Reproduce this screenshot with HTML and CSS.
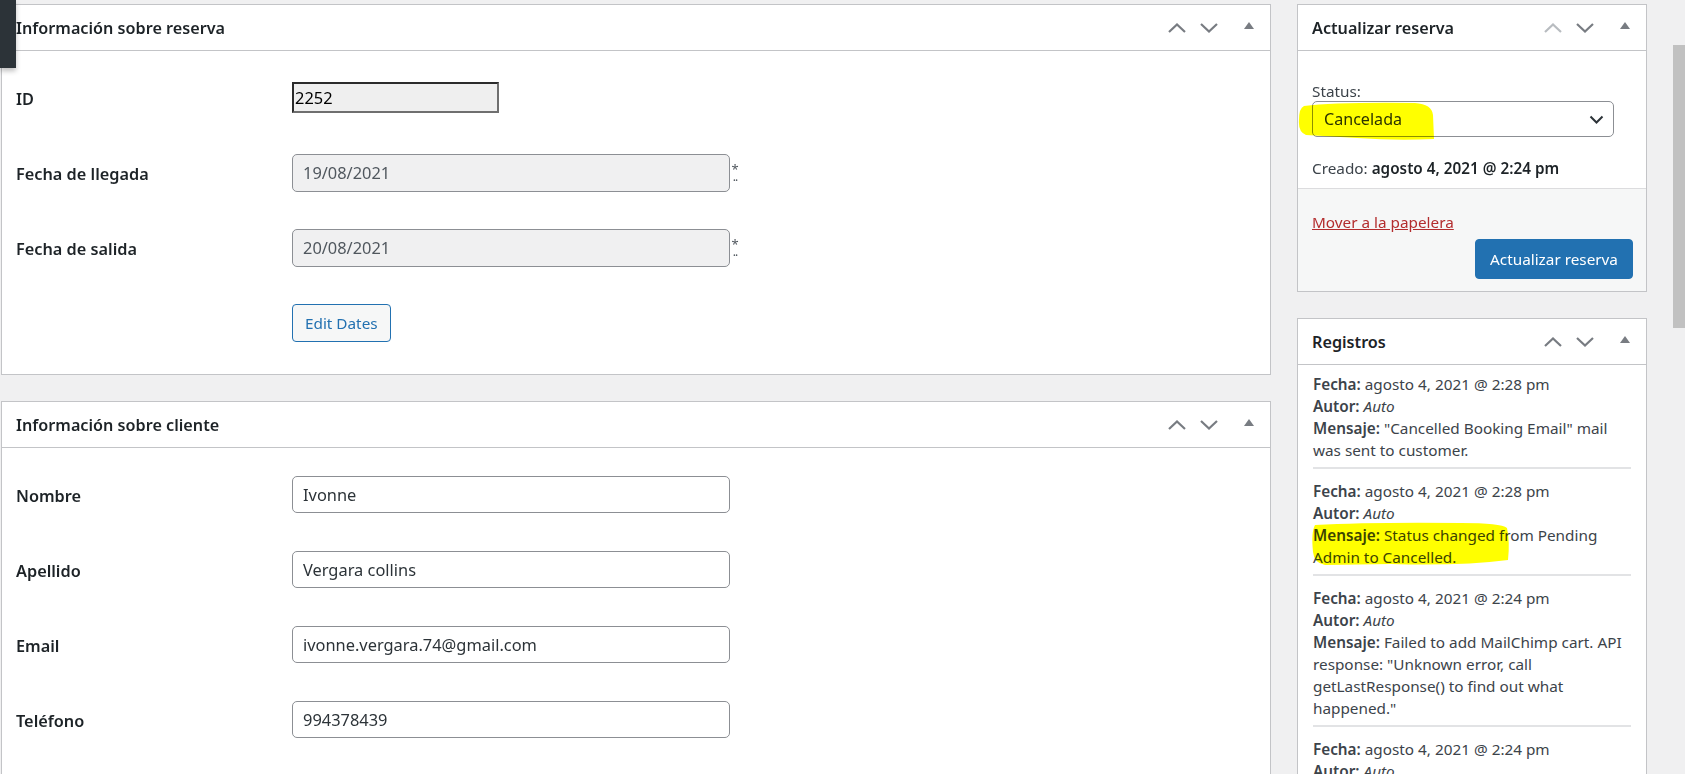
FILE: index.html
```html
<!doctype html>
<html lang="es">
  <head>
    <meta charset="UTF-8" />
    <title>Editar reserva</title>
    <link rel="stylesheet" href="styles.css">
  </head>
  <body>
    <div class="menu-flyout"></div>

    <div class="wrap">
      <div class="main-col">
        <section class="postbox">
          <div class="postbox-header">
            <h2>Información sobre reserva</h2>
            <div class="handle-actions">
              <button class="handle-btn"><svg width="18" height="10" viewBox="0 0 18 10"><polyline points="1,9 9,1.5 17,9" /></svg></button>
              <button class="handle-btn"><svg width="18" height="10" viewBox="0 0 18 10"><polyline points="1,1 9,8.5 17,1" /></svg></button>
              <button class="handle-btn toggle"><svg width="10" height="7" viewBox="0 0 10 7"><polygon points="0,7 5,0 10,7" /></svg></button>
            </div>
          </div>
          <div class="inside">
            <div class="field-row">
              <label>ID</label>
              <input class="id-field" type="text" value="2252" readonly />
            </div>
            <div class="field-row">
              <label>Fecha de llegada</label>
              <input class="text-field readonly" type="text" value="19/08/2021" readonly />
              <span class="req">*<span class="req-dots">..</span></span>
            </div>
            <div class="field-row">
              <label>Fecha de salida</label>
              <input class="text-field readonly" type="text" value="20/08/2021" readonly />
              <span class="req">*<span class="req-dots">..</span></span>
            </div>
            <div class="field-row actions-row">
              <button class="button-secondary">Edit Dates</button>
            </div>
          </div>
        </section>

        <section class="postbox">
          <div class="postbox-header">
            <h2>Información sobre cliente</h2>
            <div class="handle-actions">
              <button class="handle-btn"><svg width="18" height="10" viewBox="0 0 18 10"><polyline points="1,9 9,1.5 17,9" /></svg></button>
              <button class="handle-btn"><svg width="18" height="10" viewBox="0 0 18 10"><polyline points="1,1 9,8.5 17,1" /></svg></button>
              <button class="handle-btn toggle"><svg width="10" height="7" viewBox="0 0 10 7"><polygon points="0,7 5,0 10,7" /></svg></button>
            </div>
          </div>
          <div class="inside tall">
            <div class="field-row">
              <label>Nombre</label>
              <input class="text-field" type="text" value="Ivonne" />
            </div>
            <div class="field-row">
              <label>Apellido</label>
              <input class="text-field" type="text" value="Vergara collins" />
            </div>
            <div class="field-row">
              <label>Email</label>
              <input class="text-field" type="text" value="ivonne.vergara.74@gmail.com" />
            </div>
            <div class="field-row">
              <label>Teléfono</label>
              <input class="text-field" type="text" value="994378439" />
            </div>
          </div>
        </section>
      </div>

      <aside class="side-col">
        <section class="postbox">
          <div class="postbox-header">
            <h2>Actualizar reserva</h2>
            <div class="handle-actions">
              <button class="handle-btn disabled"><svg width="18" height="10" viewBox="0 0 18 10"><polyline points="1,9 9,1.5 17,9" /></svg></button>
              <button class="handle-btn"><svg width="18" height="10" viewBox="0 0 18 10"><polyline points="1,1 9,8.5 17,1" /></svg></button>
              <button class="handle-btn toggle"><svg width="10" height="7" viewBox="0 0 10 7"><polygon points="0,7 5,0 10,7" /></svg></button>
            </div>
          </div>
          <div class="misc">
            <label class="status-label">Status:</label>
            <div class="select-wrap">
              <select>
                <option>Cancelada</option>
                <option>Confirmada</option>
                <option>Pendiente</option>
              </select>
              <svg width="15" height="9" viewBox="0 0 15 9"><polyline points="1.5,1.5 7.5,7.5 13.5,1.5" /></svg>
            </div>
            <div class="created">Creado: <b>agosto 4, 2021 @ 2:24 pm</b></div>
          </div>
          <div class="publishing">
            <a class="trash-link" href="#">Mover a la papelera</a>
            <button class="button-primary">Actualizar reserva</button>
          </div>
          <!-- marker stroke over the status -->
          <svg class="marker marker-status" width="138" height="40" viewBox="0 0 138 40"><path d="M7 5 Q40 1 118 2 Q135 3 136 14 L137 38 Q100 40 60 37 L9 34 Q1 31 2 19 Q2 7 7 5 Z" /></svg>
        </section>

        <section class="postbox">
          <div class="postbox-header">
            <h2>Registros</h2>
            <div class="handle-actions">
              <button class="handle-btn"><svg width="18" height="10" viewBox="0 0 18 10"><polyline points="1,9 9,1.5 17,9" /></svg></button>
              <button class="handle-btn"><svg width="18" height="10" viewBox="0 0 18 10"><polyline points="1,1 9,8.5 17,1" /></svg></button>
              <button class="handle-btn toggle"><svg width="10" height="7" viewBox="0 0 10 7"><polygon points="0,7 5,0 10,7" /></svg></button>
            </div>
          </div>
          <div class="log-list">
            <div class="log-entry">
              <b>Fecha:</b> agosto 4, 2021 @ 2:28 pm<br>
              <b>Autor:</b> <i>Auto</i><br>
              <b>Mensaje:</b> "Cancelled Booking Email" mail was sent to customer.
            </div>
            <div class="log-entry">
              <b>Fecha:</b> agosto 4, 2021 @ 2:28 pm<br>
              <b>Autor:</b> <i>Auto</i><br>
              <b>Mensaje:</b> Status changed from Pending Admin to Cancelled.
            </div>
            <div class="log-entry">
              <b>Fecha:</b> agosto 4, 2021 @ 2:24 pm<br>
              <b>Autor:</b> <i>Auto</i><br>
              <b>Mensaje:</b> Failed to add MailChimp cart. API response: "Unknown error, call getLastResponse() to find out what happened."
            </div>
            <div class="log-entry">
              <b>Fecha:</b> agosto 4, 2021 @ 2:24 pm<br>
              <b>Autor:</b> <i>Auto</i>
            </div>
          </div>
          <!-- marker stroke over the status change -->
          <svg class="marker marker-log" width="199" height="44" viewBox="0 0 199 44"><path d="M4 3 Q60 0 150 1 Q190 1 196 6 Q199 20 197 38 Q150 44 80 42 L14 43 Q3 41 2 30 Q0 10 4 3 Z" /></svg>
        </section>
      </aside>
    </div>

    <div class="scroll-thumb"></div>
  </body>
</html>
```

FILE: styles.css
```css
* {
  box-sizing: border-box;
}

html,
body {
  margin: 0;
  height: 100%;
  overflow: hidden;
}

body {
  background: #f0f0f1;
  font-family: "Noto Sans", "Open Sans", sans-serif;
  font-size: 15.3px;
  line-height: 1.4;
  color: #3c434a;
}

.wrap {
  display: flex;
  align-items: flex-start;
  gap: 26px;
  padding: 4px 0 0 1px;
}

.main-col {
  width: 1270px;
  display: flex;
  flex-direction: column;
  gap: 26px;
}

.side-col {
  width: 350px;
  display: flex;
  flex-direction: column;
  gap: 26px;
}

/* boxes */

.postbox {
  position: relative;
  background: #fff;
  border: 1px solid #c3c4c7;
}

.postbox-header {
  height: 46px;
  display: flex;
  align-items: center;
  justify-content: space-between;
  padding-left: 14px;
  border-bottom: 1px solid #c3c4c7;
}

.postbox-header h2 {
  margin: 0;
  padding-top: 2px;
  font-size: 16.2px;
  font-weight: 600;
  color: #1d2327;
}

.handle-actions {
  display: flex;
  height: 100%;
  padding-right: 5px;
}

.handle-btn {
  width: 32px;
  height: 100%;
  display: flex;
  align-items: center;
  justify-content: center;
  padding: 0;
  border: 0;
  background: none;
  cursor: pointer;
}

.handle-btn polyline {
  fill: none;
  stroke: #787c82;
  stroke-width: 2.2;
}

.handle-btn polygon {
  fill: #787c82;
}

.handle-btn.disabled polyline {
  stroke: #b8bcc0;
}

.handle-btn.toggle {
  margin-left: 8px;
  padding-bottom: 4px;
}

/* form rows */

.inside {
  padding: 9px 0 14px 14px;
}

.inside.tall {
  padding-bottom: 60px;
}

.field-row {
  display: flex;
  align-items: center;
  height: 75px;
}

.field-row label {
  width: 276px;
  padding-top: 4px;
  font-size: 16.3px;
  font-weight: 600;
  color: #1d2327;
}

.actions-row {
  padding-left: 276px;
}

.id-field {
  width: 207px;
  height: 31px;
  padding: 0 1px;
  border: 2px solid;
  border-color: #2b2b2b #6f6f6f #6f6f6f #2b2b2b;
  background: #efefef;
  font-family: inherit;
  font-size: 16.4px;
  color: #000;
}

.text-field {
  width: 438px;
  height: 37px;
  padding: 0 10px;
  border: 1px solid #8c8f94;
  border-radius: 5px;
  background: #fff;
  font-family: inherit;
  font-size: 16.4px;
  color: #2c3338;
}

.text-field.readonly {
  height: 38px;
  background: #f0f0f1;
  color: #50575e;
}

.req {
  display: flex;
  flex-direction: column;
  align-items: center;
  width: 8px;
  margin-left: 1px;
  font-size: 13px;
  line-height: 9px;
  color: #50575e;
}

.req-dots {
  font-size: 12px;
  line-height: 6px;
  letter-spacing: -1px;
}

.button-secondary {
  height: 38px;
  padding: 0 12px;
  border: 1px solid #2271b1;
  border-radius: 4px;
  background: #f6f7f7;
  font-family: inherit;
  font-size: 15.3px;
  color: #2271b1;
  cursor: pointer;
}

/* publish box */

.misc {
  padding: 30px 14px 9px;
}

.status-label {
  display: block;
  line-height: 20px;
}

.select-wrap {
  position: relative;
  width: 302px;
}

.select-wrap select {
  appearance: none;
  width: 100%;
  height: 36px;
  padding: 0 11px;
  border: 1px solid #8c8f94;
  border-radius: 5px;
  background: #fff;
  font-family: inherit;
  font-size: 16.1px;
  color: #2c3338;
}

.select-wrap svg {
  position: absolute;
  right: 10px;
  top: 14px;
  pointer-events: none;
}

.select-wrap polyline {
  fill: none;
  stroke: #2c3338;
  stroke-width: 2;
}

.created {
  margin-top: 20px;
  line-height: 22px;
}

.created b {
  font-weight: 600;
  color: #1d2327;
}

.publishing {
  display: flex;
  flex-direction: column;
  padding: 22px 13px 12px 14px;
  border-top: 1px solid #dcdcde;
  background: #f6f7f7;
}

.trash-link {
  align-self: flex-start;
  line-height: 22px;
  color: #b32d2e;
  text-decoration: underline;
}

.button-primary {
  align-self: flex-end;
  margin-top: 6px;
  width: 158px;
  height: 40px;
  padding: 0;
  border: 1px solid #2271b1;
  border-radius: 4px;
  background: #2271b1;
  font-family: inherit;
  font-size: 15.3px;
  color: #fff;
  cursor: pointer;
}

/* log box */

.log-list {
  padding: 8px 15px 0;
}

.log-entry {
  padding-bottom: 6px;
  margin-bottom: 11px;
  border-bottom: 2px solid #e2e3e5;
  line-height: 22px;
}

.log-entry b {
  font-weight: 600;
}

/* yellow marker strokes */

.marker {
  position: absolute;
  mix-blend-mode: multiply;
  pointer-events: none;
}

.marker path {
  fill: #ffff00;
}

.marker-status {
  left: -1px;
  top: 96px;
}

.marker-log {
  left: 13px;
  top: 203px;
}

/* admin chrome bits */

.menu-flyout {
  position: absolute;
  top: 0;
  left: 0;
  width: 16px;
  height: 68px;
  background: #2c3338;
  box-shadow: 0 3px 5px rgba(0, 0, 0, 0.25);
  z-index: 5;
}

.scroll-thumb {
  position: fixed;
  top: 45px;
  right: 0;
  width: 12px;
  height: 283px;
  background: #c1c1c1;
}
```
